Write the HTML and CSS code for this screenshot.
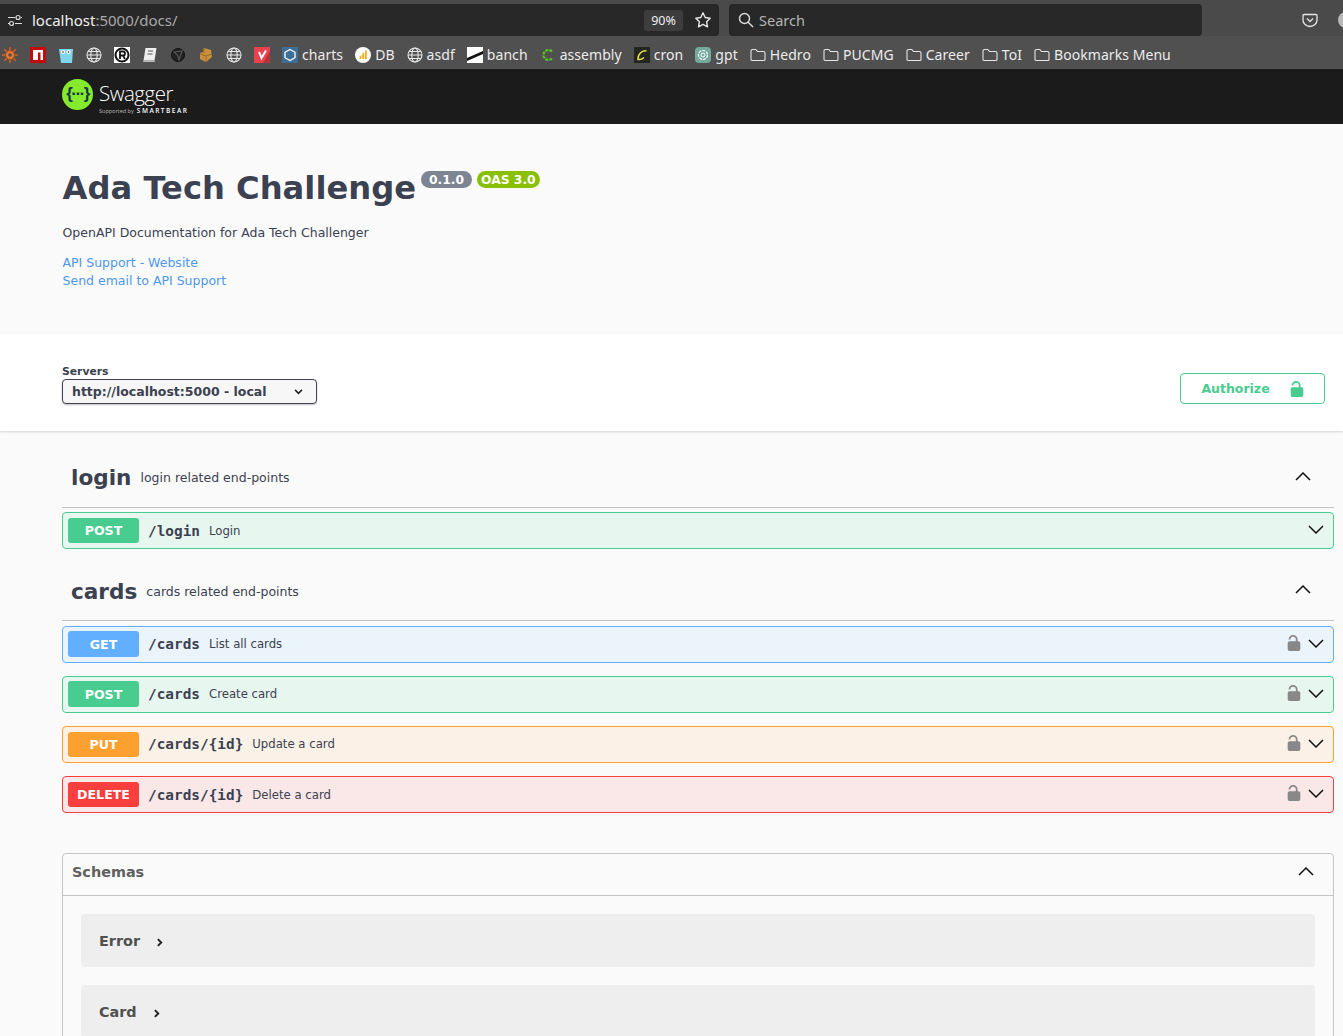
FILE: index.html
```html
<!DOCTYPE html>
<html lang="en">
<head>
  <meta charset="UTF-8" />
  <title>Swagger UI</title>
  <link rel="stylesheet" href="styles.css">
</head>
<body>
  <div class="browser-bar">
    <div class="url-box">
      <svg class="ico-tune" viewBox="0 0 16 16" width="16" height="16"><path d="M1 5.500h7M1 11.500h1M8 11.500h7M14 5.500h1" stroke="#ddd" stroke-width="1.200" fill="none"/><circle cx="11" cy="5.500" r="2" stroke="#ddd" stroke-width="1.200" fill="none"/><circle cx="4.500" cy="11.500" r="2" stroke="#ddd" stroke-width="1.200" fill="none"/></svg>
      <span class="url-host">localhost<span class="url-rest">:5000/docs/</span></span>
      <span class="zoom-pill">90%</span>
      <svg viewBox="0 0 18 18" width="18" height="18"><path d="M9 1.800l2.200 4.700 5 .7-3.600 3.500.9 5.100L9 13.300l-4.500 2.500.9-5.100L1.800 7.200l5-.7z" stroke="#e6e6e6" stroke-width="1.400" fill="none" stroke-linejoin="round"/></svg>
    </div>
    <div class="search-box">
      <svg viewBox="0 0 16 16" width="16" height="16"><circle cx="6.500" cy="6.500" r="5" stroke="#ddd" stroke-width="1.400" fill="none"/><path d="M10.200 10.200l4.800 4.800" stroke="#ddd" stroke-width="1.400"/></svg>
      <span>Search</span>
    </div>
    <svg class="ico-pocket" viewBox="0 0 16 16" width="16" height="16"><path d="M2 2.500h12a1 1 0 0 1 1 1V8a7 6.500 0 0 1-14 0V3.500a1 1 0 0 1 1-1z" stroke="#e6e6e6" stroke-width="1.300" fill="none"/><path d="M5 6.500l3 3 3-3" stroke="#e6e6e6" stroke-width="1.300" fill="none"/></svg>
    <span class="avatar"></span>
  </div>

  <div class="bookmarks">
    <span class="bm"><svg viewBox="0 0 16 16" width="16" height="16"><g stroke="#d2601f" stroke-width="1.600"><path d="M8 0v16M0 8h16M2.300 2.300l11.400 11.400M13.700 2.300L2.300 13.700"/></g><circle cx="8" cy="8" r="4.500" fill="#e27a35" stroke="#a8481a"/><circle cx="8" cy="8" r="1.800" fill="#4f4f4f"/></svg></span>
    <span class="bm"><svg viewBox="0 0 16 16" width="16" height="16"><rect width="16" height="16" fill="#c60a0a"/><path d="M3 3h10v10h-2.500V5.500H8V13H3z" fill="#fff"/></svg></span>
    <span class="bm"><svg viewBox="0 0 16 16" width="16" height="16"><path d="M1 2h14l-1 14H3z" fill="#7fd5ea"/><circle cx="5" cy="5" r="2" fill="#fff"/><circle cx="10.500" cy="5" r="2" fill="#fff"/><circle cx="5" cy="5" r=".8" fill="#222"/><circle cx="10.500" cy="5" r=".8" fill="#222"/></svg></span>
    <span class="bm"><svg viewBox="0 0 16 16" width="16" height="16"><use href="#globe"/></svg></span>
    <span class="bm"><svg viewBox="0 0 16 16" width="16" height="16"><rect width="16" height="16" fill="#fff"/><circle cx="8" cy="8" r="6.500" fill="none" stroke="#111" stroke-width="2"/><path d="M6 12V4.500h3a2 2 0 0 1 0 4H6m3 0l2 3.500" fill="none" stroke="#111" stroke-width="1.800"/></svg></span>
    <span class="bm"><svg viewBox="0 0 16 16" width="16" height="16"><path d="M3.500 1h11l-2 12.500h-11z" fill="#eee"/><path d="M1.500 13.500h11l.5 1.500H1z" fill="#bbb"/><path d="M6 4h5M5.500 7h5" stroke="#555"/></svg></span>
    <span class="bm"><svg viewBox="0 0 16 16" width="16" height="16"><circle cx="8" cy="8" r="6.500" fill="#222" stroke="#111"/><path d="M4 5l8-1-3 9-1.500-5z" fill="none" stroke="#555" stroke-width="1.200"/></svg></span>
    <span class="bm"><svg viewBox="0 0 16 16" width="16" height="16"><path d="M6 1l7 2 1 7-6 5-6-3V6l3-1z" fill="#c98f3d"/><path d="M8 15V9l6-2M2 7l6 2M6 1v5" stroke="#a06c25" fill="none"/></svg></span>
    <span class="bm"><svg viewBox="0 0 16 16" width="16" height="16"><use href="#globe"/></svg></span>
    <span class="bm"><svg viewBox="0 0 16 16" width="16" height="16"><rect width="16" height="16" fill="#e8424e"/><path d="M16 4L9 16h7z" fill="#b5323b"/><path d="M5 5l2.500 6L12 3.500" fill="none" stroke="#fff" stroke-width="2"/></svg></span>
    <span class="bm"><svg viewBox="0 0 16 16" width="16" height="16"><rect width="16" height="16" fill="#3c6e96"/><path d="M8 2.500l5 2.800v5.400l-5 2.800-5-2.800V5.300z" fill="none" stroke="#fff" stroke-width="1.300"/></svg>charts</span>
    <span class="bm"><svg viewBox="0 0 16 16" width="16" height="16"><circle cx="8" cy="8" r="8" fill="#fff"/><path d="M4.500 9.500l2-1.500v4h-2zM7.200 7l2-2v7h-2zM10 3.500h1.800V12H10z" fill="#f2b01e"/></svg>DB</span>
    <span class="bm"><svg viewBox="0 0 16 16" width="16" height="16"><use href="#globe"/></svg>asdf</span>
    <span class="bm"><svg viewBox="0 0 16 16" width="16" height="16"><rect width="16" height="16" fill="#fff"/><path d="M0 11L16 4v3L0 14z" fill="#111"/></svg>banch</span>
    <span class="bm"><svg viewBox="0 0 16 16" width="16" height="16"><path d="M12 4.500A5 5 0 1 0 12 11.500" fill="none" stroke="#55c81e" stroke-width="2.200" stroke-dasharray="3 1"/></svg>assembly</span>
    <span class="bm"><svg viewBox="0 0 16 16" width="16" height="16"><rect width="16" height="16" fill="#23261e"/><path d="M12.500 4C8 2.500 3.500 8 4 12.500c3 .5 5-1 6-2" fill="none" stroke="#e6e24a" stroke-width="1.500"/></svg>cron</span>
    <span class="bm"><svg viewBox="0 0 16 16" width="16" height="16"><rect width="16" height="16" rx="4" fill="#74aa9c"/><circle cx="8" cy="8" r="4.500" fill="none" stroke="#fff" stroke-width="1.200" stroke-dasharray="3 1"/><circle cx="8" cy="8" r="2" fill="none" stroke="#fff"/></svg>gpt</span>
    <span class="bm"><svg viewBox="0 0 16 16" width="16" height="16"><use href="#folder"/></svg>Hedro</span>
    <span class="bm"><svg viewBox="0 0 16 16" width="16" height="16"><use href="#folder"/></svg>PUCMG</span>
    <span class="bm"><svg viewBox="0 0 16 16" width="16" height="16"><use href="#folder"/></svg>Career</span>
    <span class="bm"><svg viewBox="0 0 16 16" width="16" height="16"><use href="#folder"/></svg>ToI</span>
    <span class="bm"><svg viewBox="0 0 16 16" width="16" height="16"><use href="#folder"/></svg>Bookmarks Menu</span>
  </div>

  <svg class="defs" width="0" height="0">
    <defs>
      <g id="globe" fill="none" stroke="#e6e6e6" stroke-width="1.100"><circle cx="8" cy="8" r="7"/><ellipse cx="8" cy="8" rx="3.200" ry="7"/><path d="M1 8h14M2 4.500h12M2 11.500h12"/></g>
      <path id="folder" d="M1 4a1.500 1.500 0 0 1 1.500-1.500h3.300L7.500 4.500h6A1.500 1.500 0 0 1 15 6v6.500a1 1 0 0 1-1 1H2a1 1 0 0 1-1-1z" fill="none" stroke="#e6e6e6" stroke-width="1.100"/>
      <path id="lock" d="M15 8h-1V6A5 5 0 0 0 4 6h2a3 3 0 0 1 6 0v2H5a2 2 0 0 0-2 2v7a2 2 0 0 0 2 2h10a2 2 0 0 0 2-2v-7a2 2 0 0 0-2-2z"/>
      <path id="chev-down" d="M1 1l7 7 7-7" fill="none" stroke="#111" stroke-width="1.500"/>
      <path id="chev-up" d="M1 8l7-7 7 7" fill="none" stroke="#111" stroke-width="1.500"/>
    </defs>
  </svg>

  <div class="topbar">
    <span class="logo-mark">{···}</span>
    <div class="logo-text">
      <span class="logo-name">Swagger<span class="logo-dot">.</span></span>
      <span class="logo-sub"><span class="logo-by">Supported by</span> SMARTBEAR</span>
    </div>
  </div>

  <section class="info">
    <div class="title-row">
      <h1>Ada Tech Challenge</h1>
      <span class="badge badge-version">0.1.0</span>
      <span class="badge badge-oas">OAS 3.0</span>
    </div>
    <p class="desc">OpenAPI Documentation for Ada Tech Challenger</p>
    <a class="link" href="#">API Support - Website</a>
    <a class="link" href="#">Send email to API Support</a>
  </section>

  <section class="schemes">
    <div class="servers">
      <span class="servers-label">Servers</span>
      <div class="select-box">
        <span>http://localhost:5000 - local</span>
        <svg viewBox="0 0 10 7" width="9" height="6"><path d="M1 1l4 4 4-4" fill="none" stroke="#222" stroke-width="1.800"/></svg>
      </div>
    </div>
    <button class="authorize">Authorize
      <svg viewBox="0 0 20 20" width="18" height="18"><use href="#lock"/></svg>
    </button>
  </section>

  <main class="ops">
    <div class="tag tag-login">
      <h3>login</h3><span class="tag-desc">login related end-points</span>
      <svg class="tag-chev" viewBox="0 0 16 9" width="16" height="9"><use href="#chev-up"/></svg>
    </div>
    <div class="op op-post op-low">
      <span class="method">POST</span><span class="path">/login</span><span class="summary">Login</span>
      <svg class="op-chev" viewBox="0 0 16 9" width="16" height="9"><use href="#chev-down"/></svg>
    </div>

    <div class="tag tag-cards">
      <h3>cards</h3><span class="tag-desc">cards related end-points</span>
      <svg class="tag-chev" viewBox="0 0 16 9" width="16" height="9"><use href="#chev-up"/></svg>
    </div>
    <div class="op op-get op-tall">
      <span class="method">GET</span><span class="path">/cards</span><span class="summary">List all cards</span>
      <svg class="op-lock" viewBox="0 0 20 20" width="18" height="18"><use href="#lock"/></svg>
      <svg class="op-chev" viewBox="0 0 16 9" width="16" height="9"><use href="#chev-down"/></svg>
    </div>
    <div class="op op-post op-tall">
      <span class="method">POST</span><span class="path">/cards</span><span class="summary">Create card</span>
      <svg class="op-lock" viewBox="0 0 20 20" width="18" height="18"><use href="#lock"/></svg>
      <svg class="op-chev" viewBox="0 0 16 9" width="16" height="9"><use href="#chev-down"/></svg>
    </div>
    <div class="op op-put">
      <span class="method">PUT</span><span class="path">/cards/{id}</span><span class="summary">Update a card</span>
      <svg class="op-lock" viewBox="0 0 20 20" width="18" height="18"><use href="#lock"/></svg>
      <svg class="op-chev" viewBox="0 0 16 9" width="16" height="9"><use href="#chev-down"/></svg>
    </div>
    <div class="op op-delete op-low">
      <span class="method">DELETE</span><span class="path">/cards/{id}</span><span class="summary">Delete a card</span>
      <svg class="op-lock" viewBox="0 0 20 20" width="18" height="18"><use href="#lock"/></svg>
      <svg class="op-chev" viewBox="0 0 16 9" width="16" height="9"><use href="#chev-down"/></svg>
    </div>

    <div class="models">
      <div class="models-head">
        <h4>Schemas</h4>
        <svg viewBox="0 0 16 9" width="16" height="9"><use href="#chev-up"/></svg>
      </div>
      <div class="models-body">
        <div class="model">Error
          <svg viewBox="0 0 7 10" width="6" height="9"><path d="M1 1l4 4-4 4" fill="none" stroke="#222" stroke-width="2.200"/></svg>
        </div>
        <div class="model">Card
          <svg viewBox="0 0 7 10" width="6" height="9"><path d="M1 1l4 4-4 4" fill="none" stroke="#222" stroke-width="2.200"/></svg>
        </div>
      </div>
    </div>
  </main>
</body>
</html>
```

FILE: styles.css
```css
html, body {
  margin: 0;
  height: 1036px;
  overflow: hidden;
}
body {
  font-family: 'DejaVu Sans', sans-serif;
  background-color: #fafafa;
  color: #3b4151;
}
.defs {
  display: block;
  height: 0;
}

/* browser chrome */
.browser-bar {
  height: 36px;
  box-sizing: border-box;
  padding-top: 4px;
  display: flex;
  background-color: #4a4a4a;
  font-family: 'Noto Sans', sans-serif;
  color: #ddd;
  overflow: hidden;
}
.url-box {
  flex: none;
  width: 719px;
  height: 32px;
  box-sizing: border-box;
  padding: 0 7px;
  display: flex;
  align-items: center;
  background-color: #282828;
  border-radius: 0 4px 4px 0;
}
.url-host {
  margin-left: 9px;
  flex: 1;
  font-size: 15px;
  color: #f0f0f0;
}
.url-rest {
  color: #a8a8a8;
}
.zoom-pill {
  width: 39px;
  height: 21px;
  margin-right: 11px;
  display: flex;
  align-items: center;
  justify-content: center;
  background-color: #3d3d3d;
  border-radius: 3px;
  font-size: 12.500px;
  color: #eee;
}
.search-box {
  flex: none;
  width: 473px;
  height: 32px;
  margin-left: 10px;
  box-sizing: border-box;
  padding: 0 9px;
  display: flex;
  align-items: center;
  gap: 5px;
  background-color: #282828;
  border-radius: 4px;
  font-size: 14.500px;
  color: #b5b5b5;
}
.ico-pocket {
  flex: none;
  margin: 8px 0 0 100px;
}
.avatar {
  flex: none;
  width: 16px;
  height: 16px;
  margin: 8px 0 0 20px;
  border-radius: 50%;
  background-color: #b8b8b8;
}
.bookmarks {
  height: 33px;
  box-sizing: border-box;
  padding: 4px 0 0 2px;
  display: flex;
  align-items: center;
  gap: 12px;
  background-color: #505050;
  font-family: 'Noto Sans', sans-serif;
  font-size: 14px;
  letter-spacing: 0.06px;
  color: #ececec;
  white-space: nowrap;
}
.bm {
  display: flex;
  align-items: center;
  gap: 4px;
}

/* swagger top bar */
.topbar {
  height: 55px;
  box-sizing: border-box;
  padding: 0 0 5px 62px;
  display: flex;
  align-items: center;
  gap: 6px;
  background-color: #1b1b1b;
}
.logo-mark {
  width: 31px;
  height: 31px;
  display: flex;
  align-items: center;
  justify-content: center;
  border-radius: 50%;
  background-color: #85ea2d;
  font-family: 'Liberation Sans', sans-serif;
  font-size: 17px;
  letter-spacing: -1.500px;
  font-weight: bold;
  color: #173647;
}
.logo-text {
  display: flex;
  flex-direction: column;
  padding-top: 8px;
  color: #fff;
  font-family: 'Open Sans', sans-serif;
}
.logo-name {
  font-size: 20.500px;
  font-weight: 300;
  line-height: 24px;
  letter-spacing: -0.5px;
}
.logo-dot {
  font-size: 10px;
  color: #999;
}
.logo-sub {
  margin-top: -2px;
  font-size: 6.500px;
  font-weight: 600;
  line-height: 8px;
  letter-spacing: 1.500px;
}
.logo-by {
  font-size: 5.500px;
  font-weight: 400;
  letter-spacing: 0;
  color: #bbb;
}

/* info block */
.info {
  height: 210px;
  box-sizing: border-box;
  padding: 47px 0 0 62.500px;
}
.title-row {
  display: flex;
  align-items: flex-start;
}
h1 {
  margin: 0;
  font-size: 32.200px;
  line-height: 35px;
  font-weight: bold;
}
.badge {
  height: 17px;
  margin: 0 0 0 5px;
  padding: 0 4px;
  display: flex;
  align-items: center;
  border-radius: 9px;
  font-size: 12.300px;
  font-weight: bold;
  color: #fff;
}
.badge-version {
  background-color: #7d8492;
  padding: 0 8px;
}
.badge-oas {
  background-color: #89bf04;
}
.desc {
  margin: 18px 0 12px;
  font-size: 12.500px;
  line-height: 18px;
}
.link {
  display: block;
  font-size: 12.500px;
  line-height: 18px;
  color: #4f97ea;
  text-decoration: none;
}

/* servers row */
.schemes {
  height: 97px;
  margin-bottom: 1px;
  box-sizing: border-box;
  padding: 31px 18px 0 62px;
  display: flex;
  justify-content: space-between;
  background-color: #fff;
  box-shadow: 0 1px 2px rgba(0,0,0,0.15);
}
.servers-label {
  display: block;
  font-size: 10.800px;
  line-height: 14px;
  font-weight: bold;
}
.select-box {
  width: 255px;
  height: 25px;
  box-sizing: border-box;
  padding: 0 13px 0 9px;
  display: flex;
  align-items: center;
  justify-content: space-between;
  background-color: #f7f7f7;
  border: 1px solid #41444e;
  border-radius: 4px;
  box-shadow: 0 1px 2px rgba(0,0,0,0.25);
  font-size: 12.500px;
  font-weight: bold;
}
.authorize {
  width: 145px;
  height: 31px;
  margin-top: 8px;
  padding: 0 0 0 2px;
  display: flex;
  align-items: center;
  justify-content: center;
  gap: 18px;
  background: transparent;
  border: 1px solid #49cc90;
  border-radius: 4px;
  font-family: 'DejaVu Sans', sans-serif;
  font-size: 12.500px;
  font-weight: bold;
  color: #49cc90;
}
.authorize svg {
  fill: #49cc90;
}

/* operations */
.ops {
  padding: 0 9px 0 62px;
}
.tag {
  display: flex;
  align-items: center;
  box-sizing: border-box;
  padding-left: 9px;
  border-bottom: 1px solid #c4c4c4;
}
.tag-login {
  height: 76px;
  padding-top: 16px;
}
.tag-login + .op {
  margin-top: 4px;
}
.tag-cards {
  height: 59px;
}
.tag h3 {
  margin: 0 9px 0 0;
  font-size: 21.600px;
  font-weight: bold;
}
.tag-desc {
  flex: 1;
  font-size: 12.500px;
}
.tag-chev {
  margin: 0 23px 3px 0;
}
.op {
  height: 37px;
  box-sizing: border-box;
  margin-top: 5px;
  margin-bottom: 13px;
  padding: 0 9px 0 5px;
  display: flex;
  align-items: center;
  border: 1px solid;
  border-radius: 4px;
}
.method {
  width: 71px;
  height: 25px;
  display: flex;
  align-items: center;
  justify-content: center;
  border-radius: 3px;
  font-size: 12.600px;
  font-weight: bold;
  color: #fff;
}
.op-tall .method {
  height: 26px;
  margin-bottom: 1px;
}
.path {
  margin: 0 0 2px 9px;
  font-family: 'DejaVu Sans Mono', monospace;
  font-size: 14.400px;
  font-weight: bold;
}
.summary {
  flex: 1;
  margin: 0 0 1px 9px;
  font-size: 11.700px;
}
.op-low .path {
  margin-bottom: 0;
}
.op-low .summary {
  margin-bottom: 0;
}
.op-lock {
  margin: 0 5px 3px 0;
  fill: #888;
}
.op-chev {
  margin-bottom: 3px;
}
.op-post { background-color: #e8f6f0; border-color: #49cc90; }
.op-post .method { background-color: #49cc90; }
.op-get { background-color: #ebf3fb; border-color: #61affe; }
.op-get .method { background-color: #61affe; }
.op-put { background-color: #fbf1e6; border-color: #fca130; }
.op-put .method { background-color: #fca130; }
.op-delete { background-color: #fae7e7; border-color: #f93e3e; }
.op-delete .method { background-color: #f93e3e; }

/* schemas */
.models {
  margin-top: 40px;
  border: 1px solid #c4c4c4;
  border-radius: 4px;
}
.models-head {
  height: 42px;
  box-sizing: border-box;
  padding: 0 19px 6px 9px;
  display: flex;
  align-items: center;
  justify-content: space-between;
  border-bottom: 1px solid #c4c4c4;
}
h4 {
  margin: 0;
  font-size: 14.400px;
  font-weight: bold;
  color: #606060;
}
.models-body {
  padding: 18px 18px 0;
}
.model {
  height: 53px;
  margin-bottom: 18px;
  box-sizing: border-box;
  padding-left: 18px;
  display: flex;
  align-items: center;
  gap: 17px;
  background-color: #eeeeee;
  border-radius: 4px;
  font-size: 14.400px;
  font-weight: bold;
  color: #505050;
}
.model svg {
  margin-top: 3px;
}
```
